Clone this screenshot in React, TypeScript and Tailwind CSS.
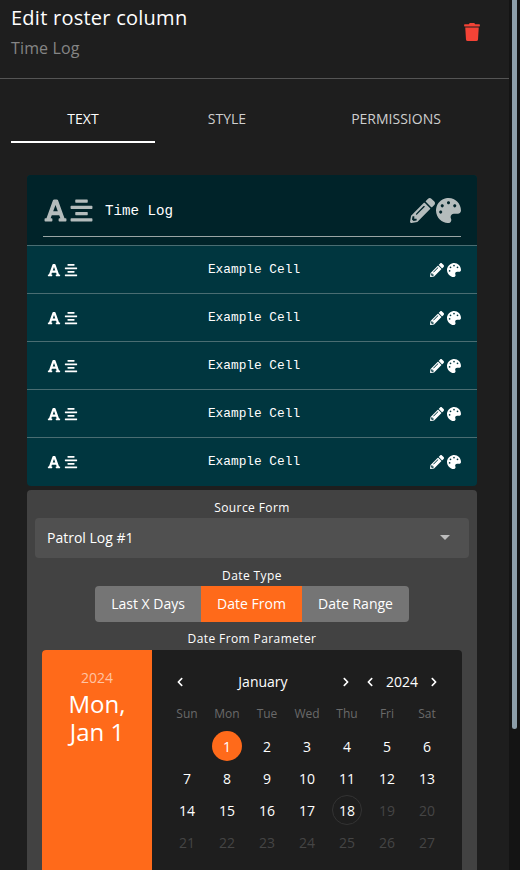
import { FaAlignCenter, FaChevronLeft, FaChevronRight, FaFont, FaPalette, FaPencilAlt, FaTrash } from "react-icons/fa";

const sans = "font-['Open_Sans',sans-serif]";
const orange = "bg-[#ff6a1a]";

function ColumnIcons({ large }: { large?: boolean }) {
  return large ? (
    <div className="flex items-center gap-[1px] text-[#b4bcbc]">
      <FaPencilAlt size={25} />
      <FaPalette size={25} />
    </div>
  ) : (
    <div className="flex items-center gap-[3px] text-white">
      <FaPencilAlt size={14} />
      <FaPalette size={14} />
    </div>
  );
}

function FormatIcons({ large }: { large?: boolean }) {
  return large ? (
    <div className="flex items-center gap-[1px] text-[#b4bcbc]">
      <FaFont size={25} />
      <FaAlignCenter size={25} />
    </div>
  ) : (
    <div className="flex items-center gap-[3px] text-white">
      <FaFont size={14} />
      <FaAlignCenter size={14} />
    </div>
  );
}

function ExampleRow() {
  return (
    <div className="flex h-[48px] items-center justify-between border-t border-[#4a6d72] pl-[20px] pr-[16px]">
      <FormatIcons />
      <span className="font-['Liberation_Mono',monospace] text-[12.8px] text-white">Example Cell</span>
      <ColumnIcons />
    </div>
  );
}

function Calendar() {
  const cells: (number | null)[] = [null, ...Array.from({ length: 31 }, (_, i) => i + 1), null, null, null];
  return (
    <div className="mx-[15px] mt-[2px] flex h-[260px] overflow-hidden rounded-[4px] bg-[#1e1e1e]">
      <div className={`w-[110px] shrink-0 pt-[18px] text-center text-white ${orange}`}>
        <div className="text-[14px] leading-[20px] text-[#ffc4a4]">2024</div>
        <div className="mt-[2px] text-[24px] leading-[28px]">
          Mon,
          <br />
          Jan 1
        </div>
      </div>
      <div className="flex-1 px-[15px]">
        <div className="flex h-[55px] items-center pt-[8px] text-white">
          <FaChevronLeft size={10} className="ml-[8px]" />
          <span className="flex-1 text-center text-[14px]">January</span>
          <FaChevronRight size={10} />
          <FaChevronLeft size={10} className="ml-[14px]" />
          <span className="mx-[11px] text-[14px]">2024</span>
          <FaChevronRight size={10} className="mr-[8px]" />
        </div>
        <div className="grid grid-cols-7 text-center text-[12px] text-[#6a6a6a]">
          {["Sun", "Mon", "Tue", "Wed", "Thu", "Fri", "Sat"].map((d) => (
            <div key={d} className="h-[17px] leading-[17px]">
              {d}
            </div>
          ))}
        </div>
        <div className="mt-[8px] grid grid-cols-7 text-center text-[14px]">
          {cells.map((n, i) => (
            <div key={i} className="flex h-[32px] items-center justify-center">
              {n === 1 ? (
                <span className={`flex h-[30px] w-[30px] items-center justify-center rounded-full text-white ${orange}`}>1</span>
              ) : n === 18 ? (
                <span className="flex h-[30px] w-[30px] items-center justify-center rounded-full border border-[#333333] text-white">18</span>
              ) : (
                <span className={n !== null && n > 18 ? "text-[#454545]" : "text-white"}>{n}</span>
              )}
            </div>
          ))}
        </div>
      </div>
    </div>
  );
}

export default function App() {
  return (
    <div className={`flex h-[870px] w-[520px] overflow-hidden bg-[#141414] ${sans}`}>
      <div className="h-full w-[509px] shrink-0 overflow-hidden bg-[#1e1e1e]">
        <div className="flex h-[79px] items-start justify-between border-b border-[#555555] pl-[11px] pr-[28px]">
          <div className="pt-[5px]">
            <div className="text-[20px] leading-[26px] tracking-[0.25px] text-white">Edit roster column</div>
            <div className="mt-[5px] text-[16px] leading-[24px] tracking-[0.15px] text-[#858585]">Time Log</div>
          </div>
          <FaTrash size={18} className="mt-[23px] text-[#f44336]" />
        </div>

        <div className="ml-[11px] mt-[16px] grid grid-cols-[144px_144px_194px] text-center text-[14px] font-medium uppercase">
          <div className="h-[48px] border-b-2 border-white leading-[47px] text-white">Text</div>
          <div className="h-[48px] leading-[47px] text-[#cfcfcf]">Style</div>
          <div className="h-[48px] leading-[47px] text-[#cfcfcf]">Permissions</div>
        </div>

        <div className="ml-[27px] mt-[32px] w-[450px]">
          <div className="overflow-hidden rounded-[4px] bg-[#00363f] pb-[1px]">
            <div className="h-[70px] bg-[#002329] px-[16px]">
              <div className="flex h-[62px] items-center justify-between border-b border-[#9aa5a5] pt-[9px]">
                <div className="flex items-center gap-[11px]">
                  <FormatIcons large />
                  <span className="pt-[3px] font-['Liberation_Mono',monospace] text-[14.2px] text-white">Time Log</span>
                </div>
                <ColumnIcons large />
              </div>
            </div>
            <ExampleRow />
            <ExampleRow />
            <ExampleRow />
            <ExampleRow />
            <ExampleRow />
          </div>

          <div className="mt-[4px] rounded-[4px] bg-[#424242] pt-[9px]">
            <div className="text-center text-[12px] leading-[18px] tracking-[0.4px] text-white">Source Form</div>
            <div className="mx-[8px] mt-[1px] flex h-[40px] items-center justify-between rounded-[4px] bg-[#505050] pb-[2px] pl-[12px] pr-[19px] text-[14px] text-white">
              Patrol Log #1
              <span className="h-0 w-0 border-x-[5px] border-t-[5px] border-x-transparent border-t-[#bdbdbd]" />
            </div>
            <div className="mt-[9px] text-center text-[12px] leading-[18px] tracking-[0.4px] text-white">Date Type</div>
            <div className="mt-[1px] flex justify-center text-[14px] text-white">
              <div className="flex h-[36px] w-[106px] items-center justify-center rounded-l-[4px] bg-[#757575] pb-[2px]">Last X Days</div>
              <div className={`flex h-[36px] w-[101px] items-center justify-center pb-[2px] ${orange}`}>Date From</div>
              <div className="flex h-[36px] w-[107px] items-center justify-center rounded-r-[4px] bg-[#757575] pb-[2px]">Date Range</div>
            </div>
            <div className="mt-[8px] text-center text-[12px] leading-[18px] tracking-[0.4px] text-white">Date From Parameter</div>
            <Calendar />
          </div>
        </div>
      </div>
      <div className="ml-[3px] h-[729px] w-[5px] rounded-b-[3px] bg-[#8d9ea9]" />
    </div>
  );
}
